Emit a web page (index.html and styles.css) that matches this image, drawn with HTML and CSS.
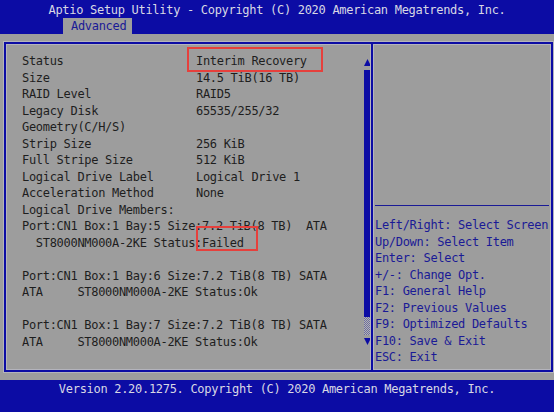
FILE: index.html
```html
<!DOCTYPE html>
<html>
<head>
    <meta charset="UTF-8">
    <title>Aptio Setup Utility</title>
    <link rel="stylesheet" href="styles.css">
</head>
<body>
    <div class="topbar">
        <div class="title">Aptio Setup Utility - Copyright (C) 2020 American Megatrends, Inc.</div>
        <div class="tabs"><span class="tab">Advanced</span></div>
    </div>

    <div class="frame">
        <div class="main">
            <div class="fields">
                <span>Status</span><span>Interim Recovery</span>
                <span>Size</span><span>14.5 TiB(16 TB)</span>
                <span>RAID Level</span><span>RAID5</span>
                <span>Legacy Disk</span><span>65535/255/32</span>
                <span>Geometry(C/H/S)</span><span></span>
                <span>Strip Size</span><span>256 KiB</span>
                <span>Full Stripe Size</span><span>512 KiB</span>
                <span>Logical Drive Label</span><span>Logical Drive 1</span>
                <span>Acceleration Method</span><span>None</span>
                <span class="wide">Logical Drive Members:</span>
                <span class="wide">Port:CN1 Box:1 Bay:5 Size:7.2 TiB(8 TB)  ATA</span>
                <span class="wide">  ST8000NM000A-2KE Status:Failed</span>
                <span class="wide"> </span>
                <span class="wide">Port:CN1 Box:1 Bay:6 Size:7.2 TiB(8 TB) SATA</span>
                <span class="wide">ATA     ST8000NM000A-2KE Status:Ok</span>
                <span class="wide"> </span>
                <span class="wide">Port:CN1 Box:1 Bay:7 Size:7.2 TiB(8 TB) SATA</span>
                <span class="wide">ATA     ST8000NM000A-2KE Status:Ok</span>
            </div>
            <div class="scroll">
                <svg class="arrow" width="7" height="7" viewBox="0 0 7 7"><polygon points="3.5,0 7,7 0,7" fill="#0c0ca4"/></svg>
                <div class="thumb"></div>
                <div class="track"></div>
                <svg class="arrow" width="7" height="7" viewBox="0 0 7 7"><polygon points="0,0 7,0 3.5,7" fill="#0c0ca4"/></svg>
            </div>
        </div>
        <div class="help">
            <div class="help-top"></div>
            <div class="keys">
                <div>Left/Right: Select Screen</div>
                <div>Up/Down: Select Item</div>
                <div>Enter: Select</div>
                <div>+/-: Change Opt.</div>
                <div>F1: General Help</div>
                <div>F2: Previous Values</div>
                <div>F9: Optimized Defaults</div>
                <div>F10: Save &amp; Exit</div>
                <div>ESC: Exit</div>
            </div>
        </div>
    </div>

    <div class="footer">Version 2.20.1275. Copyright (C) 2020 American Megatrends, Inc.</div>

    <!-- marks drawn over the screen -->
    <div class="mark mark-status"></div>
    <div class="mark mark-failed"></div>
</body>
</html>
```

FILE: styles.css
```css
body {
    margin: 0;
    background-color: #9d9d9d;
    font-family: "DejaVu Sans Mono", "Liberation Mono", monospace;
    font-size: 12px;
    letter-spacing: -0.3px;
    line-height: 16.5px;
    color: #1e1e1e;
    width: 554px;
    height: 412px;
    overflow: hidden;
    position: relative;
}

.topbar {
    background-color: #0c0ca4;
    height: 34px;
}
.title {
    color: #d8d8e4;
    text-align: center;
    padding-top: 2px;
    height: 16px;
    line-height: 16px;
}
.tabs {
    padding-left: 63px;
}
.tab {
    display: inline-block;
    background-color: #9d9d9d;
    color: #1a1a96;
    height: 16px;
    line-height: 17px;
    padding: 0 6px 0 8px;
}

.frame {
    margin: 8px 1px 0 4px;
    height: 326px;
    border: 2px solid #0c0ca4;
    box-shadow: 0 0 0 1px #b4b4bc, inset 0 0 0 1px #b4b4bc;
    display: flex;
}

.main {
    width: 365px;
    display: flex;
    padding-top: 9px;
}
.fields {
    flex: 1;
    padding-left: 16px;
    display: grid;
    grid-template-columns: 174px 1fr;
    align-content: start;
    white-space: pre;
}
.fields .wide {
    grid-column: 1 / span 2;
}

.scroll {
    width: 7px;
    display: flex;
    flex-direction: column;
    align-items: center;
    padding-top: 6px;
}
.arrow {
    display: block;
}
.thumb {
    width: 7px;
    height: 247px;
    margin-top: 4px;
    background-color: #0c0ca4;
}
.track {
    width: 7px;
    height: 18px;
    background: repeating-conic-gradient(#6c6ca0 0 25%, #b4b4b4 0 50%) 0 0 / 2px 2px;
    margin-bottom: 3px;
}

.help {
    flex: 1;
    min-width: 0;
    border-left: 2px solid #0c0ca4;
    box-shadow: -1px 0 0 #b4b4bc, inset 1px 0 0 #b4b4bc;
    padding: 0 2px;
    overflow: hidden;
}
.help-top {
    height: 161px;
    border-bottom: 1px solid #1a1a96;
}
.keys {
    margin-top: 11px;
    color: #1a1a96;
    white-space: nowrap;
}

.footer {
    margin-top: 8px;
    height: 32px;
    background-color: #0c0ca4;
    color: #d8d8e4;
    text-align: center;
    line-height: 19px;
}

.mark {
    position: absolute;
    border: 2px solid #e6403c;
}
.mark-status {
    left: 187px;
    top: 47px;
    width: 132px;
    height: 21px;
}
.mark-failed {
    left: 196px;
    top: 226px;
    width: 58px;
    height: 21px;
}
```
